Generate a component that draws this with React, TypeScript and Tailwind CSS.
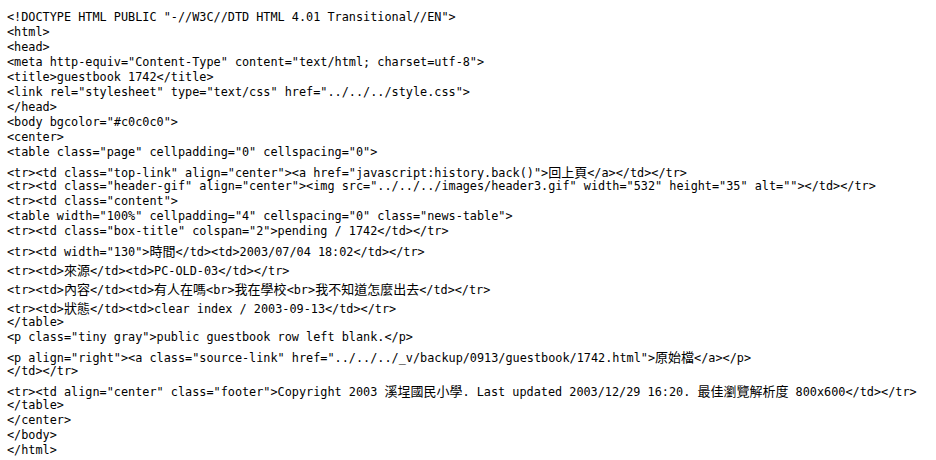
const lines: string[] = [
  '<!DOCTYPE HTML PUBLIC "-//W3C//DTD HTML 4.01 Transitional//EN">',
  '<html>',
  '<head>',
  '<meta http-equiv="Content-Type" content="text/html; charset=utf-8">',
  '<title>guestbook 1742</title>',
  '<link rel="stylesheet" type="text/css" href="../../../style.css">',
  '</head>',
  '<body bgcolor="#c0c0c0">',
  '<center>',
  '<table class="page" cellpadding="0" cellspacing="0">',
  '<tr><td class="top-link" align="center"><a href="javascript:history.back()">回上頁</a></td></tr>',
  '<tr><td class="header-gif" align="center"><img src="../../../images/header3.gif" width="532" height="35" alt=""></td></tr>',
  '<tr><td class="content">',
  '<table width="100%" cellpadding="4" cellspacing="0" class="news-table">',
  '<tr><td class="box-title" colspan="2">pending / 1742</td></tr>',
  '<tr><td width="130">時間</td><td>2003/07/04 18:02</td></tr>',
  '<tr><td>來源</td><td>PC-OLD-03</td></tr>',
  '<tr><td>內容</td><td>有人在嗎<br>我在學校<br>我不知道怎麼出去</td></tr>',
  '<tr><td>狀態</td><td>clear index / 2003-09-13</td></tr>',
  '</table>',
  '<p class="tiny gray">public guestbook row left blank.</p>',
  '<p align="right"><a class="source-link" href="../../../_v/backup/0913/guestbook/1742.html">原始檔</a></p>',
  '</td></tr>',
  '<tr><td align="center" class="footer">Copyright 2003 溪埕國民小學. Last updated 2003/12/29 16:20. 最佳瀏覽解析度 800x600</td></tr>',
  '</table>',
  '</center>',
  '</body>',
  '</html>',
];

const cjk = /([\u3400-\u9fff]+)/;

function SourceLine({ text }: { text: string }) {
  const parts = text.split(cjk);
  const wide = parts.length > 1;
  return (
    <div className={wide ? 'h-[19px] pt-[3.5px] leading-[15px] whitespace-pre' : 'h-[15px] leading-[15px] whitespace-pre'}>
      {parts.map((p, i) =>
        i % 2 === 1 ? (
          <span key={i} className="font-['Noto_Sans_CJK_TC',sans-serif] text-[13px] leading-[15px]">
            {p}
          </span>
        ) : (
          <span key={i}>{p}</span>
        )
      )}
    </div>
  );
}

export default function App() {
  return (
    <div className="w-[936px] h-[460px] bg-white text-black overflow-hidden pt-[10px] pl-[7px] font-['DejaVu_Sans_Mono','Noto_Sans_CJK_TC',monospace] text-[11.83px]">
      {lines.map((l, i) => (
        <SourceLine key={i} text={l} />
      ))}
    </div>
  );
}
